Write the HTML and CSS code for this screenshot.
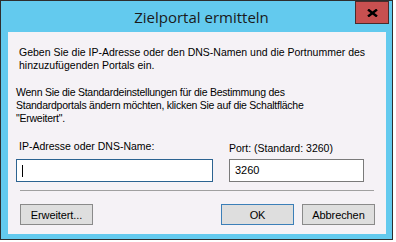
FILE: index.html
```html
<!DOCTYPE html>
<html lang="de">
<head>
  <meta charset="UTF-8" />
  <title>Zielportal ermitteln</title>
  <link rel="stylesheet" href="styles.css">
</head>
<body>
  <div class="window">
    <div class="titlebar">
      <span class="title">Zielportal ermitteln</span>
      <button class="close" aria-label="Schließen">
        <svg width="11" height="8" viewBox="0 0 11 8"><path d="M1 0.5 L10 7.5 M10 0.5 L1 7.5" stroke="#000" stroke-width="2.4"/></svg>
      </button>
    </div>
    <div class="client">
      <p class="intro">Geben Sie die IP-Adresse oder den DNS-Namen und die Portnummer des<br>hinzuzufügenden Portals ein.</p>
      <p class="hint">Wenn Sie die Standardeinstellungen für die Bestimmung des<br>Standardportals ändern möchten, klicken Sie auf die Schaltfläche<br>"Erweitert".</p>
      <div class="fields">
        <div class="field ip">
          <label>IP-Adresse oder DNS-Name:</label>
          <div class="input focused"><span class="caret"></span></div>
        </div>
        <div class="field port">
          <label>Port: (Standard: 3260)</label>
          <div class="input">3260</div>
        </div>
      </div>
      <div class="sep"></div>
      <div class="actions">
        <button class="btn">Erweitert...</button>
        <span class="spacer"></span>
        <button class="btn default">OK</button>
        <button class="btn">Abbrechen</button>
      </div>
    </div>
  </div>
</body>
</html>
```

FILE: styles.css
```css
* {
  margin: 0;
  padding: 0;
  box-sizing: border-box;
}
body {
  width: 396px;
  height: 242px;
  background: #fff;
  font-family: 'Liberation Sans', Arial, sans-serif;
  font-size: 10.5px;
  letter-spacing: -0.25px;
  line-height: 13px;
  color: #000;
  overflow: hidden;
}
.window {
  width: 393px;
  height: 240px;
  border: 1px solid #2e2e2e;
  background: #63caee;
  display: flex;
  flex-direction: column;
}
.titlebar {
  position: relative;
  height: 31px;
  display: flex;
  justify-content: center;
  align-items: flex-start;
}
.title {
  font-family: 'Open Sans', 'Noto Sans', sans-serif;
  font-size: 15px;
  letter-spacing: 0;
  line-height: 20px;
  margin-top: 6px;
  margin-left: 10px;
  color: #1a1a1a;
}
.close {
  position: absolute;
  top: 0;
  right: 3px;
  width: 34px;
  height: 23px;
  background: #c75050;
  border: 1px solid #4a2b2b;
  display: flex;
  justify-content: center;
  align-items: center;
}
.client {
  width: 378px;
  height: 202px;
  margin-left: 7px;
  background: #f5f2f6;
  padding: 14px 11px 0 8px;
}
.intro,
.hint {
  white-space: nowrap;
}
.intro {
  padding-left: 3px;
  letter-spacing: 0;
}
.hint {
  margin-top: 14px;
}
.fields {
  display: grid;
  grid-template-columns: 197px 135px;
  column-gap: 16px;
  align-items: end;
  margin-top: 15px;
}
.field {
  display: flex;
  flex-direction: column;
}
.field label {
  margin-bottom: 6px;
  white-space: nowrap;
  letter-spacing: 0;
}
.ip label {
  padding-left: 3px;
}
.port label {
  margin-bottom: 4px;
}
.input {
  height: 23px;
  border: 1px solid #7a7a7a;
  background: #fff;
  padding-left: 5px;
  display: flex;
  align-items: center;
  font-size: 11px;
  letter-spacing: 0;
}
.input.focused {
  border-color: #2c6391;
}
.caret {
  width: 1px;
  height: 12px;
  background: #000;
}
.sep {
  height: 1px;
  background: #a0a0a0;
  margin: 8px 1px 0 4px;
}
.actions {
  display: flex;
  gap: 8px;
  margin-top: 13px;
  padding-left: 4px;
}
.spacer {
  flex: 1;
}
.btn {
  width: 73px;
  height: 21px;
  background: #dedede;
  border: 1px solid #8a8a8a;
  font-family: inherit;
  font-size: 11px;
  letter-spacing: -0.1px;
  color: #000;
}
.btn.default {
  border-color: #3c7fb8;
}
```
